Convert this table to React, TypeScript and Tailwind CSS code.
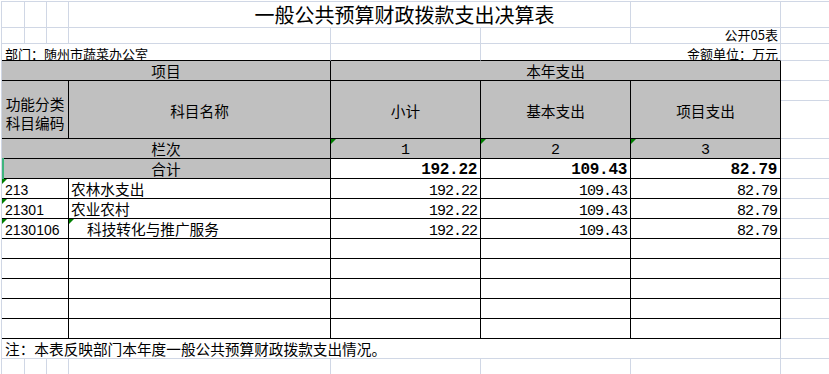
import React from "react";

const GRID = "border-r border-b border-[#d0d7e5]";
const HCOL = "border-b border-[#d0d7e5]";
const BLACK = "border-r border-b border-black";
const GRAY = "bg-[#c0c0c0]";
const NUM =
  "flex justify-end pr-[3px] pt-[2.5px] font-['Liberation_Mono',monospace] text-[15px] leading-[19px] tracking-[-1px] whitespace-nowrap";
const NUMB =
  "flex justify-end pr-[3px] pt-[2px] font-['Liberation_Mono',monospace] font-bold text-[16px] leading-[19px] tracking-[-0.3px] whitespace-nowrap";

function Tri() {
  return (
    <svg className="absolute left-0 top-0" width="5" height="5" viewBox="0 0 5 5">
      <polygon points="0,0 5,0 0,5" fill="#008000" />
    </svg>
  );
}

const rows = [
  { code: "213", name: "农林水支出", indent: false, tri: false },
  { code: "21301", name: "农业农村", indent: false, tri: false },
  { code: "2130106", name: "科技转化与推广服务", indent: true, tri: true },
];

export default function App() {
  return (
    <div className="w-[829px] h-[374px] overflow-hidden bg-white text-black font-['Noto_Sans_CJK_SC','Noto_Sans_CJK_JP',sans-serif] text-[14.67px]">
      <div className="ml-[1px] mt-[1px] border-l border-t border-[#d0d7e5] grid grid-cols-[23px_22px_22px_262px_150px_150px_150px_200px] grid-rows-[26px_16px_17px_20px_20px_38px_repeat(12,20px)]">
        {/* row 1: title */}
        <div className={GRID} />
        <div className={GRID} />
        <div className={GRID} />
        <div
          className={`col-span-3 ${GRID} flex justify-center pl-[110px] pt-[1px] text-[20px] leading-[24px] whitespace-nowrap`}
        >
          一般公共预算财政拨款支出决算表
        </div>
        <div className={GRID} />
        <div className={HCOL} />

        {/* row 2 */}
        <div className={GRID} />
        <div className={GRID} />
        <div className={GRID} />
        <div className={GRID} />
        <div className={GRID} />
        <div className={GRID} />
        <div className={`${GRID} flex justify-end items-start pr-[2px] text-[13px] leading-[14px] whitespace-nowrap`}>
          公开05表
        </div>
        <div className={HCOL} />

        {/* row 3 */}
        <div className="col-span-4 border-r border-b border-r-[#d0d7e5] border-b-black pl-[3px] pt-[2px] text-[13px] leading-[16px] whitespace-nowrap">
          部门：随州市蔬菜办公室
        </div>
        <div className="border-r border-b border-r-[#d0d7e5] border-b-black" />
        <div className="col-span-2 border-r border-b border-r-[#d0d7e5] border-b-black flex justify-end items-start pr-[2px] pt-[2px] text-[13px] leading-[16px] whitespace-nowrap">
          金额单位：万元
        </div>
        <div className={HCOL} />

        {/* row 4 */}
        <div className={`col-span-4 ${BLACK} ${GRAY} text-center leading-[19px]`}>项目</div>
        <div className={`col-span-3 ${BLACK} ${GRAY} text-center leading-[19px]`}>本年支出</div>
        <div className={HCOL} />

        {/* row 5-6 */}
        <div
          className={`col-span-3 row-span-2 ${BLACK} ${GRAY} flex items-center justify-center text-center leading-[19px] pt-[6px]`}
        >
          功能分类
          <br />
          科目编码
        </div>
        <div className={`row-span-2 ${BLACK} ${GRAY} flex items-center justify-center leading-[19px] pt-[2px]`}>
          科目名称
        </div>
        <div className={`row-span-2 ${BLACK} ${GRAY} flex items-center justify-center leading-[19px] pt-[2px]`}>
          小计
        </div>
        <div className={`row-span-2 ${BLACK} ${GRAY} flex items-center justify-center leading-[19px] pt-[2px]`}>
          基本支出
        </div>
        <div className={`row-span-2 ${BLACK} ${GRAY} flex items-center justify-center leading-[19px] pt-[2px]`}>
          项目支出
        </div>
        <div className={HCOL} />
        <div className={HCOL} />

        {/* row 7: 栏次 */}
        <div className={`col-span-4 ${BLACK} ${GRAY} text-center leading-[19px]`}>栏次</div>
        {["1", "2", "3"].map((n) => (
          <div
            key={n}
            className={`relative ${BLACK} ${GRAY} flex justify-center pt-[1.5px] font-['Liberation_Mono',monospace] text-[15px] leading-[19px]`}
          >
            <Tri />
            {n}
          </div>
        ))}
        <div className={HCOL} />

        {/* row 8: 合计 */}
        <div className={`relative col-span-4 ${BLACK} ${GRAY} text-center leading-[19px]`}>
          <div className="absolute left-0 top-[-1px] bottom-[-1px] w-[2px] bg-[#3fb57d] z-10" />
          合计
        </div>
        <div className={`${BLACK} ${NUMB}`}>192.22</div>
        <div className={`${BLACK} ${NUMB}`}>109.43</div>
        <div className={`${BLACK} ${NUMB}`}>82.79</div>
        <div className={HCOL} />

        {/* data rows */}
        {rows.map((r) => (
          <React.Fragment key={r.code}>
            <div
              className={`relative col-span-3 ${BLACK} pl-[3px] pt-[2px] font-['Liberation_Sans',sans-serif] text-[14px] leading-[19px] whitespace-nowrap`}
            >
              <Tri />
              {r.code}
            </div>
            <div
              className={`relative ${BLACK} ${r.indent ? "pl-[18px]" : "pl-[2px]"} leading-[19px] whitespace-nowrap`}
            >
              {r.tri && <Tri />}
              {r.name}
            </div>
            <div className={`${BLACK} ${NUM}`}>192.22</div>
            <div className={`${BLACK} ${NUM}`}>109.43</div>
            <div className={`${BLACK} ${NUM}`}>82.79</div>
            <div className={HCOL} />
          </React.Fragment>
        ))}

        {/* empty rows */}
        {[0, 1, 2, 3, 4].map((i) => (
          <React.Fragment key={i}>
            <div className={`col-span-3 ${BLACK}`} />
            <div className={BLACK} />
            <div className={BLACK} />
            <div className={BLACK} />
            <div className={BLACK} />
            <div className={HCOL} />
          </React.Fragment>
        ))}

        {/* note row */}
        <div className={`col-span-7 ${GRID} pl-[3px] leading-[19px] whitespace-nowrap`}>
          注：本表反映部门本年度一般公共预算财政拨款支出情况。
        </div>
        <div className={HCOL} />

        {/* last row */}
        <div className={GRID} />
        <div className={GRID} />
        <div className={GRID} />
        <div className={GRID} />
        <div className={GRID} />
        <div className={GRID} />
        <div className={GRID} />
        <div className={HCOL} />
      </div>
    </div>
  );
}
